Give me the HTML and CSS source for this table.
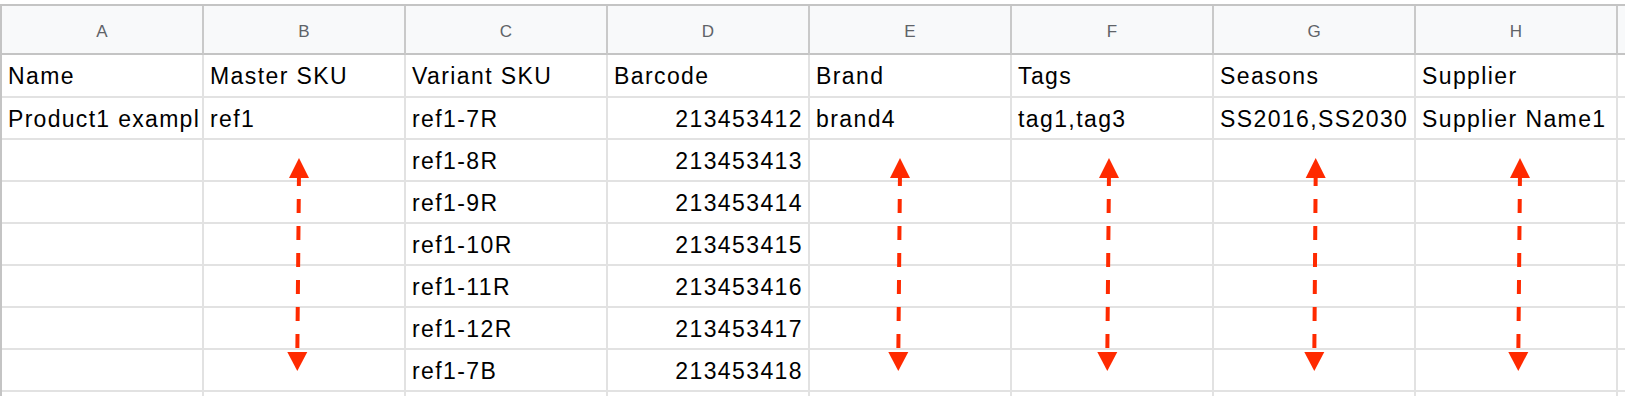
FILE: index.html
```html
<!DOCTYPE html>
<html>
<head>
<meta charset="utf-8">
<link rel="stylesheet" href="styles.css">
</head>
<body>
<div class="page">
  <div class="sheet">
    <div class="hd">A</div><div class="hd">B</div><div class="hd">C</div><div class="hd">D</div><div class="hd">E</div><div class="hd">F</div><div class="hd">G</div><div class="hd">H</div><div class="hd hd-end"></div>

    <div class="c">Name</div><div class="c">Master SKU</div><div class="c">Variant SKU</div><div class="c">Barcode</div><div class="c">Brand</div><div class="c">Tags</div><div class="c">Seasons</div><div class="c">Supplier</div><div class="c end"></div>

    <div class="c c-first">Product1 exampl</div><div class="c">ref1</div><div class="c">ref1-7R</div><div class="c num">213453412</div><div class="c">brand4</div><div class="c">tag1,tag3</div><div class="c">SS2016,SS2030</div><div class="c">Supplier Name1</div><div class="c end"></div>

    <div class="c"></div><div class="c"></div><div class="c">ref1-8R</div><div class="c num">213453413</div><div class="c"></div><div class="c"></div><div class="c"></div><div class="c"></div><div class="c end"></div>

    <div class="c"></div><div class="c"></div><div class="c">ref1-9R</div><div class="c num">213453414</div><div class="c"></div><div class="c"></div><div class="c"></div><div class="c"></div><div class="c end"></div>

    <div class="c"></div><div class="c"></div><div class="c">ref1-10R</div><div class="c num">213453415</div><div class="c"></div><div class="c"></div><div class="c"></div><div class="c"></div><div class="c end"></div>

    <div class="c"></div><div class="c"></div><div class="c">ref1-11R</div><div class="c num">213453416</div><div class="c"></div><div class="c"></div><div class="c"></div><div class="c"></div><div class="c end"></div>

    <div class="c"></div><div class="c"></div><div class="c">ref1-12R</div><div class="c num">213453417</div><div class="c"></div><div class="c"></div><div class="c"></div><div class="c"></div><div class="c end"></div>

    <div class="c"></div><div class="c"></div><div class="c">ref1-7B</div><div class="c num">213453418</div><div class="c"></div><div class="c"></div><div class="c"></div><div class="c"></div><div class="c end"></div>

    <div class="c"></div><div class="c"></div><div class="c"></div><div class="c"></div><div class="c"></div><div class="c"></div><div class="c"></div><div class="c"></div><div class="c end"></div>
  </div>

  <svg class="arrows" width="1625" height="396" viewBox="0 0 1625 396" xmlns="http://www.w3.org/2000/svg">
    <g fill="#ff2a00" stroke="none">
      <polygon points="299,158 289,178 309,178"/>
      <polygon points="287.3,352 307.3,352 297.3,371"/>
      <polygon points="900,158 890,178 910,178"/>
      <polygon points="888.3,352 908.3,352 898.3,371"/>
      <polygon points="1109,158 1099,178 1119,178"/>
      <polygon points="1097.3,352 1117.3,352 1107.3,371"/>
      <polygon points="1315.7,158 1305.7,178 1325.7,178"/>
      <polygon points="1304.3,352 1324.3,352 1314.3,371"/>
      <polygon points="1520,158 1510,178 1530,178"/>
      <polygon points="1508.3,352 1528.3,352 1518.3,371"/>
    </g>
    <g stroke="#ff2a00" stroke-width="4" stroke-dasharray="14 13" fill="none">
      <line x1="299" y1="172" x2="297.3" y2="356"/>
      <line x1="900" y1="172" x2="898.3" y2="356"/>
      <line x1="1109" y1="172" x2="1107.3" y2="356"/>
      <line x1="1315.7" y1="172" x2="1314.3" y2="356"/>
      <line x1="1520" y1="172" x2="1518.3" y2="356"/>
    </g>
  </svg>
</div>
</body>
</html>
```

FILE: styles.css
```css
html, body {
  margin: 0;
  padding: 0;
  background: #ffffff;
}

.page {
  position: relative;
  width: 1625px;
  height: 396px;
  overflow: hidden;
  padding-top: 4px;
  box-sizing: border-box;
}

.sheet {
  display: grid;
  grid-template-columns: repeat(8, 202px) 1fr;
  grid-template-rows: 49px 43px repeat(8, 42px);
  border-top: 2px solid #c4c4c4;
  border-left: 2px solid #c4c4c4;
  font-family: "Liberation Sans", Arial, sans-serif;
}

.hd {
  box-sizing: border-box;
  background: #f8f9fa;
  border-right: 2px solid #c9c9c9;
  border-bottom: 2px solid #c4c4c4;
  color: #5f6368;
  font-size: 17px;
  text-align: center;
  padding-top: 4px;
  line-height: 43px;
}

.hd-end {
  border-right: none;
}

.c {
  box-sizing: border-box;
  background: #ffffff;
  border-right: 2px solid #e2e2e2;
  border-bottom: 2px solid #e2e2e2;
  color: #000000;
  font-size: 23px;
  letter-spacing: 1.4px;
  line-height: 42px;
  padding: 0 6px;
  white-space: nowrap;
  overflow: hidden;
}

.c.c-first {
  padding: 0 0 0 6px;
  letter-spacing: 1.3px;
}

.c.num {
  text-align: right;
  padding-right: 5px;
}

.c.end {
  border-right: none;
  padding: 0;
}

.arrows {
  position: absolute;
  left: 0;
  top: 0;
  pointer-events: none;
}
```
